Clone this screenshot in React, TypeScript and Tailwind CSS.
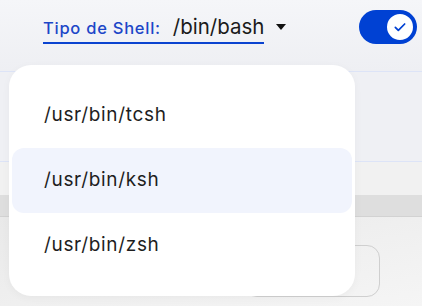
const OPTIONS = ["/usr/bin/tcsh", "/usr/bin/ksh", "/usr/bin/zsh"];
const ACTIVE = 1;

function Toggle() {
	return (
		<div className="flex items-center w-[58px] h-[34px] rounded-full bg-[#0041d3] pr-[2px] justify-end">
			<div className="flex items-center justify-center w-[30px] h-[30px] rounded-full bg-white border-2 border-[#0041d3]">
				<svg width="16" height="16" viewBox="0 0 24 24" fill="none">
					<path
						d="M5 12.5l4.5 4.5L19 7.5"
						stroke="#0041d3"
						strokeWidth="2.6"
						strokeLinecap="round"
						strokeLinejoin="round"
					/>
				</svg>
			</div>
		</div>
	);
}

export default function App() {
	return (
		<div
			className="relative w-[422px] h-[306px] overflow-hidden bg-[#ececec]"
			style={{ fontFamily: "Inter, 'Noto Sans', sans-serif" }}
		>
			{/* Background page (dimmed) */}
			<div className="flex flex-col">
				<div className="flex items-start justify-between h-[72px] bg-gradient-to-b from-[#f5f6f9] to-[#eeeff3] border-b border-[#dde4f7] pl-[43px] pr-[5px] pt-[10px]">
					<div className="flex items-center mt-[4px]">
						<div className="flex items-baseline gap-[12px] border-b-2 border-[#0a43d0] pb-[1px]">
							<span className="text-[16.5px] font-medium tracking-[0.045em] text-[#1c46c8]">Tipo de Shell:</span>
							<span className="text-[20.5px] text-[#1b1b1b] leading-[26px]">/bin/bash</span>
						</div>
						<svg className="ml-[12px] -mt-[3px]" width="10" height="6" viewBox="0 0 10 6">
							<path d="M0 0h10L5 6z" fill="#111" />
						</svg>
					</div>
					<Toggle />
				</div>
				<div className="h-[90px] bg-[#eff0f4] border-b border-[#dde4f7]" />
				<div className="h-[33px] bg-[#f1f1f1]" />
				<div className="h-[22px] bg-[#dedede] border-b border-[#d2d2d2]" />
				<div className="h-[89px] bg-gradient-to-br from-[#e9e9e9] to-[#f5f5f5] flex justify-end pr-[42px] pt-[28px]">
					<div className="w-[136px] h-[52px] rounded-[13px] border border-[#cfcfcf]" />
				</div>
			</div>

			{/* Dropdown menu */}
			<div className="absolute left-[9px] top-[65px] w-[346px] h-[231px] rounded-[22px] bg-white shadow-[0_2px_8px_rgba(0,0,0,0.04)] pt-[18px] px-[3px]">
				{OPTIONS.map((opt, i) => (
					<div
						key={opt}
						className={`flex items-center h-[65px] pl-[32px] rounded-[12px] text-[19px] tracking-[0.035em] text-[#1e1e1e] ${i === ACTIVE ? "bg-[#f1f4fd]" : ""}`}
					>
						{opt}
					</div>
				))}
			</div>
		</div>
	);
}
